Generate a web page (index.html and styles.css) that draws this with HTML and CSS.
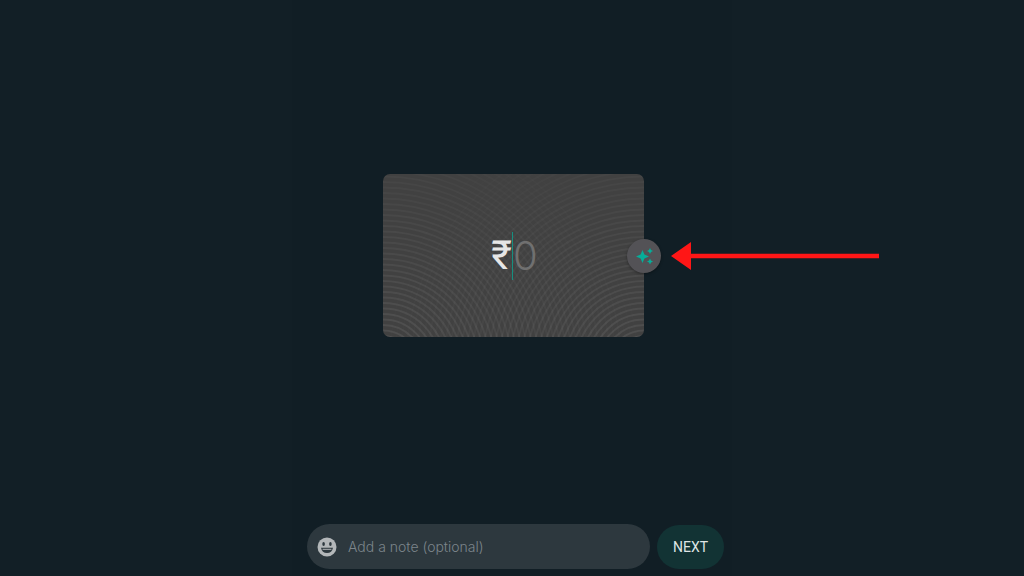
FILE: index.html
```html
<!DOCTYPE html>
<html lang="en">
<head>
<meta charset="utf-8">
<meta name="viewport" content="width=device-width, initial-scale=1">
<title>Send payment</title>
<link rel="stylesheet" href="styles.css">
</head>
<body>
<main class="screen">
  <section class="stage">
    <div class="card">
      <svg class="rings" viewBox="0 0 262 163" preserveAspectRatio="none" aria-hidden="true">
        <g class="ring-lines" id="rings"></g>
      </svg>
      <label class="currency" for="amount">₹</label>
      <span class="caret"></span>
      <input class="amount" id="amount" type="text" inputmode="numeric" placeholder="0">
      <button class="theme-button" type="button" aria-label="Choose background">
        <svg class="sparkles" viewBox="0 0 18 18" aria-hidden="true">
          <path d="M7.500 3 L9.400 7.600 L14 9.500 L9.400 11.400 L7.500 16 L5.600 11.400 L1 9.500 L5.600 7.600Z"/>
          <path d="M15 1 L16 3 L18 4 L16 5 L15 7 L14 5 L12 4 L14 3Z"/>
          <path d="M15 11.500 L16 13.500 L18 14.500 L16 15.500 L15 17.500 L14 15.500 L12 14.500 L14 13.500Z"/>
        </svg>
      </button>
      <svg class="pointer" viewBox="0 0 208 28" aria-hidden="true">
        <path d="M0 14 L20 0 V11.700 H208 V16.300 H20 V28Z"/>
      </svg>
    </div>
  </section>
  <form class="composer">
    <div class="note">
      <button class="emoji" type="button" aria-label="Emoji">
        <svg class="smiley" viewBox="0 0 20 20" aria-hidden="true">
          <circle class="face" cx="10" cy="10" r="9.500"/>
          <ellipse class="feature" cx="6.600" cy="7" rx="1.300" ry="1.900"/>
          <ellipse class="feature" cx="13.400" cy="7" rx="1.300" ry="1.900"/>
          <path class="feature" d="M4 10.800 H16 Q15 16 10 16 Q5 16 4 10.800Z"/>
          <path class="teeth" d="M5.600 12.300 H14.400"/>
        </svg>
      </button>
      <input class="note-input" type="text" placeholder="Add a note (optional)" aria-label="Add a note (optional)">
    </div>
    <button class="next" type="button">NEXT</button>
  </form>
</main>
<script src="rings.js"></script>
</body>
</html>
```
FILE: rings.js
```js
// Two overlapping families of concentric rings, centred below the card's bottom corners.
// Each ring is fainter than the one inside it.
const group = document.getElementById("rings");
for (const cx of [0, 262]) {
  for (let r = 30; r < 260; r += 5.5) {
    const ring = document.createElementNS("http://www.w3.org/2000/svg", "circle");
    ring.setAttribute("cx", cx);
    ring.setAttribute("cy", 192);
    ring.setAttribute("r", r);
    ring.setAttribute("stroke-opacity", (0.085 * (1 - r / 275)).toFixed(3));
    group.appendChild(ring);
  }
}
```
FILE: styles.css
```css
* { box-sizing: border-box; }

body {
  margin: 0;
  background: #121f26;
  font-family: "Liberation Sans", Arial, sans-serif;
}

button, input {
  margin: 0;
  padding: 0;
  border: 0;
  outline: 0;
  background: transparent;
  font-family: inherit;
}

.screen {
  display: flex;
  flex-direction: column;
  max-width: 440px;
  min-height: 100vh;
  margin: 0 auto;
  background: #111e25;
}

.stage {
  flex: 1;
  display: flex;
  align-items: center;
  justify-content: center;
  padding: 0 0 13px 3px;
}

.card {
  position: relative;
  display: flex;
  align-items: center;
  justify-content: center;
  width: 261px;
  height: 163px;
  border-radius: 7px;
  background: #414141;
}

.rings {
  position: absolute;
  inset: 0;
  width: 100%;
  height: 100%;
  border-radius: 7px;
}

.ring-lines {
  fill: none;
  stroke: #fff;
  stroke-width: 2;
}

.currency {
  position: relative;
  width: 23px;
  color: #e6e6e6;
  font-family: Roboto, sans-serif;
  font-size: 40px;
  font-weight: 400;
  line-height: 48px;
  text-align: right;
}

.caret {
  position: relative;
  width: 1px;
  height: 48px;
  background: #168f80;
}

.amount {
  position: relative;
  width: 25px;
  height: 48px;
  font-family: Inter, sans-serif;
  font-size: 40px;
  font-weight: 300;
  color: #e6e6e6;
}

.amount::placeholder { color: #707070; opacity: 1; }

.theme-button {
  position: absolute;
  top: 50%;
  right: 0;
  display: flex;
  align-items: center;
  justify-content: center;
  width: 34px;
  height: 34px;
  border-radius: 50%;
  background: #535256;
  box-shadow: 0 1px 3px rgba(0, 0, 0, 0.35);
  transform: translate(50%, -50%);
}

.sparkles {
  width: 18px;
  height: 18px;
  fill: #06ad99;
}

.pointer {
  position: absolute;
  top: 50%;
  left: 100%;
  width: 208px;
  height: 28px;
  margin-left: 27px;
  fill: #ff1616;
  transform: translateY(-50%);
}

.composer {
  display: flex;
  align-items: center;
  gap: 7px;
  padding: 0 8px 7px 15px;
}

.note {
  flex: 1;
  display: flex;
  align-items: center;
  gap: 11px;
  height: 45px;
  padding: 0 16px 0 10px;
  border-radius: 23px;
  background: #2d383e;
}

.emoji { display: flex; }

.smiley {
  width: 20px;
  height: 20px;
}

.face { fill: #b3b7b9; }
.feature { fill: #2d383e; }
.teeth { stroke: #b3b7b9; stroke-width: 1; }

.note-input {
  flex: 1;
  min-width: 0;
  font-family: Inter, sans-serif;
  font-size: 14px;
  font-weight: 300;
  color: #e6e6e6;
}

.note-input::placeholder { color: #7c858b; opacity: 1; }

.next {
  width: 67px;
  height: 44px;
  border-radius: 22px;
  background: #123334;
  color: #dfe5e5;
  font-family: Roboto, sans-serif;
  font-size: 14px;
}
```
